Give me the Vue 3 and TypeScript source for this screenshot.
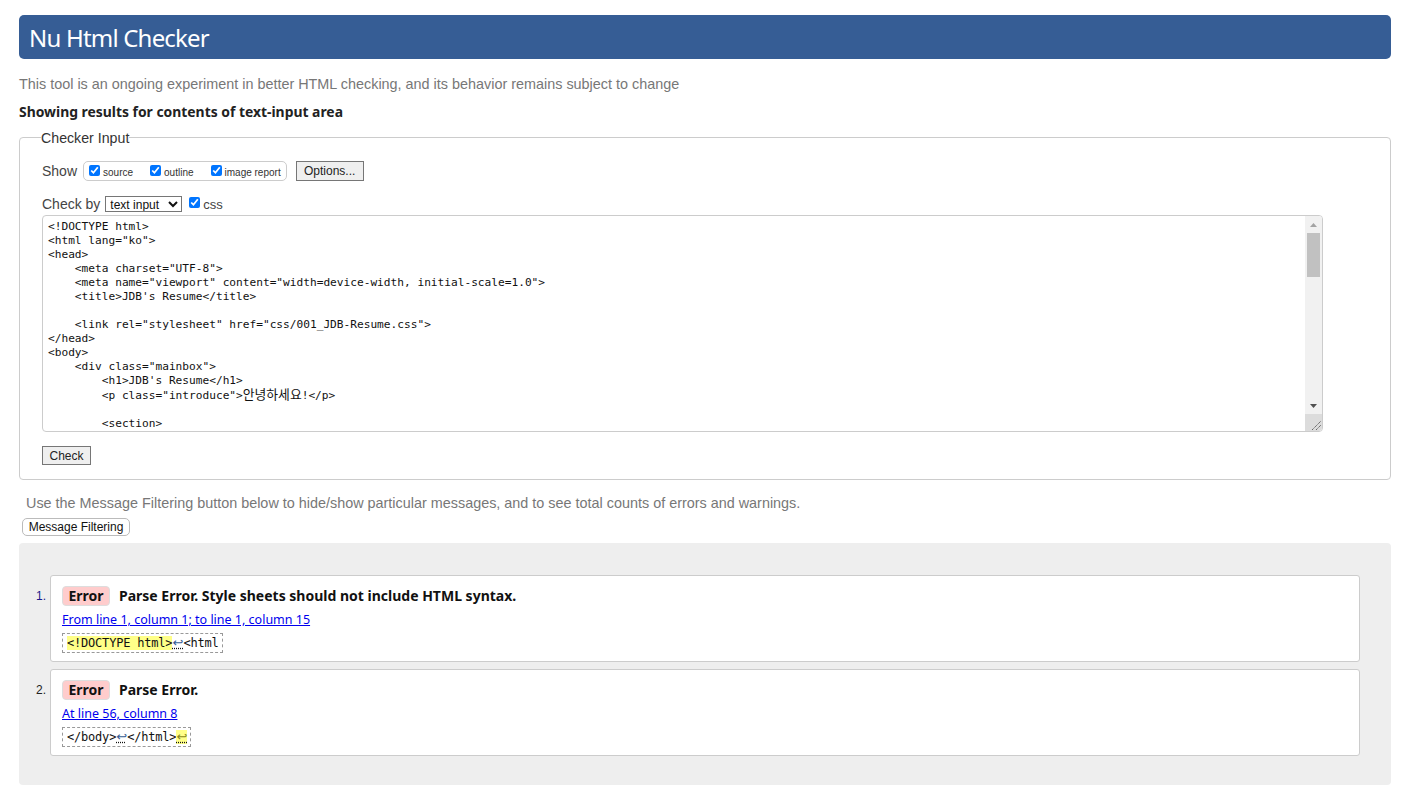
<script setup lang="ts">
interface Message {
  n: number
  title: string
  link: string
}
interface SourceLine {
  text: string
  ko?: string
  tail?: string
}
const messages: Message[] = [
  { n: 1, title: 'Parse Error. Style sheets should not include HTML syntax.', link: 'From line 1, column 1; to line 1, column 15' },
  { n: 2, title: 'Parse Error.', link: 'At line 56, column 8' },
]
const lines: SourceLine[] = [
  { text: '<!DOCTYPE html>' },
  { text: '<html lang="ko">' },
  { text: '<head>' },
  { text: '    <meta charset="UTF-8">' },
  { text: '    <meta name="viewport" content="width=device-width, initial-scale=1.0">' },
  { text: "    <title>JDB's Resume</title>" },
  { text: '' },
  { text: '    <link rel="stylesheet" href="css/001_JDB-Resume.css">' },
  { text: '</head>' },
  { text: '<body>' },
  { text: '    <div class="mainbox">' },
  { text: "        <h1>JDB's Resume</h1>" },
  { text: '        <p class="introduce">', ko: '안녕하세요', tail: '!</p>' },
  { text: '' },
  { text: '        <section>' },
]
</script>

<template>
  <div class="page">
    <h1 class="banner">Nu Html Checker</h1>
    <p class="intro">This tool is an ongoing experiment in better HTML checking, and its behavior remains subject to change</p>
    <p class="showing">Showing results for contents of text-input area</p>

    <fieldset class="input-box">
      <legend>Checker Input</legend>
      <div class="show-row">
        <span class="label">Show</span>
        <span class="options">
          <label><input type="checkbox" checked />source</label>
          <label><input type="checkbox" checked />outline</label>
          <label><input type="checkbox" checked />image report</label>
        </span>
        <button class="btn options-btn" type="button">Options...</button>
      </div>
      <div class="check-row">
        <span class="label">Check by</span>
        <select class="mode"><option>text input</option></select>
        <label class="css"><input type="checkbox" checked />css</label>
      </div>
      <div class="source">
        <div class="code">
          <div v-for="(l, i) in lines" :key="i" class="line" :class="{ 'ko-line': l.ko }"><span>{{ l.text }}</span><span v-if="l.ko" class="ko">{{ l.ko }}</span><span v-if="l.tail">{{ l.tail }}</span></div>
        </div>
        <div class="scrollbar">
          <svg class="arrow" width="17" height="17" viewBox="0 0 17 17"><path d="M5 11h7L8.500 7z" fill="#a3a3a3" /></svg>
          <div class="track"><div class="thumb"></div></div>
          <svg class="arrow" width="17" height="17" viewBox="0 0 17 17"><path d="M5 7h7l-3.500 4z" fill="#505050" /></svg>
          <div class="corner">
            <svg width="17" height="17" viewBox="0 0 17 17"><path d="M7 16L16 7M11 16l5-5" stroke="#666" stroke-width="1" stroke-dasharray="1.500 .5" fill="none" /></svg>
          </div>
        </div>
      </div>
      <button class="btn check-btn" type="button">Check</button>
    </fieldset>

    <p class="hint">Use the Message Filtering button below to hide/show particular messages, and to see total counts of errors and warnings.</p>
    <button class="filter" type="button">Message Filtering</button>

    <div class="results">
      <div v-for="m in messages" :key="m.n" class="row">
        <span class="num" :class="{ first: m.n === 1 }">{{ m.n }}.</span>
        <div class="card">
          <div class="head">
            <strong class="badge">Error</strong>
            <span class="title">{{ m.title }}</span>
          </div>
          <a class="link" href="#">{{ m.link }}</a>
          <div class="extract">
            <code v-if="m.n === 1"><mark>&lt;!DOCTYPE html&gt;</mark><u class="lf">↩</u>&lt;html</code>
            <code v-else>&lt;/body&gt;<u class="lf">↩</u>&lt;/html&gt;<mark><u class="lf hot">↩</u></mark></code>
          </div>
        </div>
      </div>
    </div>
  </div>
</template>

<style>
html, body { margin: 0; background: #fff; }
</style>

<style scoped>
.page {
  padding: 15px 34px 4px 19px;
  font-family: "Liberation Sans", Arial, sans-serif;
  color: #111;
}
.banner {
  margin: 0;
  height: 44px;
  padding-left: 10px;
  background: #365d95;
  border-radius: 5px;
  color: #fff;
  font: 400 24px/46px "Noto Sans", "Open Sans", sans-serif;
  letter-spacing: -.8px;
}
.intro {
  margin: 17px 0 0;
  font-size: 14.4px;
  line-height: 16px;
  color: #777;
}
.showing {
  margin: 11px 0 0;
  font: 700 13.9px/18px "Noto Sans", "Open Sans", sans-serif;
  color: #222;
}
.input-box {
  margin: 7px 0 0;
  padding: 0 0 14px 22px;
  min-width: 0;
  height: 352px;
  box-sizing: border-box;
  border: 1px solid #ccc;
  border-radius: 4px;
}
legend {
  padding: 2px 0 0;
  margin-left: -1px;
  font-size: 14.2px;
  line-height: 16px;
  color: #333;
}
.show-row {
  display: flex;
  align-items: center;
  margin-top: 14px;
  height: 22px;
}
.label {
  font-size: 14px;
  color: #444;
}
.options {
  display: flex;
  margin-left: 6px;
  padding: 0 5px;
  height: 18px;
  align-items: center;
  border: 1px solid #ccc;
  border-radius: 5px;
  font-size: 10px;
  color: #333;
}
.options label {
  display: flex;
  align-items: center;
  margin-right: 17px;
  padding-top: 2px;
}
.options label:last-child { margin-right: 0; }
input[type="checkbox"] {
  width: 11px;
  height: 11px;
  margin: -3px 3px 0 0;
  accent-color: #0075ff;
}
.btn {
  box-sizing: border-box;
  padding: 0;
  border: 1px solid #767676;
  border-radius: 0;
  background: #efefef;
  color: #222;
  font: 12px "Liberation Sans", Arial, sans-serif;
}
.options-btn {
  margin-left: 9px;
  width: 68px;
  height: 20px;
}
.check-row {
  display: flex;
  align-items: center;
  margin-top: 12px;
  height: 20px;
}
.mode {
  box-sizing: border-box;
  margin-left: 5px;
  width: 77px;
  height: 16px;
  padding: 0;
  border: 1px solid #767676;
  border-radius: 0;
  background: #fff;
  color: #111;
  font: 12px "Liberation Sans", Arial, sans-serif;
}
.css {
  display: flex;
  align-items: center;
  margin-left: 7px;
  font-size: 13px;
  color: #444;
}
.source {
  display: flex;
  box-sizing: border-box;
  margin-top: 1px;
  width: 1281px;
  height: 217px;
  border: 1px solid #ccc;
  border-radius: 4px;
  overflow: hidden;
}
.code {
  flex: 1;
  padding: 4px 0 0 5px;
  overflow: hidden;
  font: 11.16px/14px "DejaVu Sans Mono", "Noto Sans CJK KR", monospace;
  color: #111;
}
.line {
  height: 14px;
  white-space: pre;
}
.ko-line {
  margin: -1px 0 2px;
}
.ko {
  font: 12.8px/14px "Noto Sans CJK KR", sans-serif;
}
.scrollbar {
  display: flex;
  flex-direction: column;
  width: 17px;
  background: #f1f1f1;
}
.arrow { flex: none; }
.track {
  flex: 1;
  padding: 0 2px;
}
.thumb {
  height: 44px;
  background: #c1c1c1;
}
.corner {
  height: 17px;
  background: #dcdcdc;
}
.corner svg { display: block; }
.check-btn {
  display: block;
  margin-top: 14px;
  width: 49px;
  height: 19px;
}
.hint {
  margin: 15px 0 0 7px;
  font-size: 14.4px;
  line-height: 16px;
  color: #777;
}
.filter {
  display: block;
  box-sizing: border-box;
  margin: 7px 0 0 3px;
  width: 108px;
  height: 18px;
  padding: 0;
  border: 1px solid #bbb;
  border-radius: 5px;
  background: #fff;
  color: #111;
  font: 12px "Liberation Sans", Arial, sans-serif;
}
.results {
  display: flex;
  flex-direction: column;
  gap: 7px;
  box-sizing: border-box;
  margin-top: 7px;
  height: 242px;
  padding: 32px 31px 0 0;
  background: #eee;
  border-radius: 4px;
}
.row { display: flex; }
.num {
  width: 27px;
  margin-right: 4px;
  padding-top: 14px;
  text-align: right;
  font-size: 12px;
  line-height: 14px;
  color: #222;
}
.num.first { color: #1a1a8c; }
.card {
  flex: 1;
  box-sizing: border-box;
  height: 87px;
  padding: 10px 11px 0;
  background: #fff;
  border: 1px solid #ccc;
  border-radius: 3px;
}
.head {
  display: flex;
  align-items: center;
  height: 20px;
}
.badge {
  box-sizing: border-box;
  width: 48px;
  height: 20px;
  text-align: center;
  background: #fcc;
  border: 1px solid #ddd;
  border-radius: 4px;
  font: 700 14px/18px "Noto Sans", "Open Sans", sans-serif;
  color: #111;
}
.title {
  margin-left: 9px;
  font: 700 14px/20px "Noto Sans", "Open Sans", sans-serif;
  color: #111;
}
.link {
  display: block;
  margin-top: 5px;
  font: 12.500px/17px "Noto Sans", "Open Sans", sans-serif;
  color: #00e;
}
.extract {
  display: inline-block;
  box-sizing: border-box;
  margin-top: 5px;
  height: 20px;
  padding: 0 3px 0 4px;
  border: 1px dashed #999;
}
.extract code {
  display: block;
  font: 12px/18px "DejaVu Sans Mono", monospace;
  letter-spacing: -.2px;
  white-space: pre;
  color: #111;
}
mark {
  background: #ff8;
  color: inherit;
}
.lf {
  display: inline-block;
  width: 11px;
  font-family: "DejaVu Sans", sans-serif;
  font-size: 13px;
  line-height: 16px;
  color: #365d95;
  text-decoration: underline dotted #111;
}
.lf.hot { color: #8a8a20; }
</style>
